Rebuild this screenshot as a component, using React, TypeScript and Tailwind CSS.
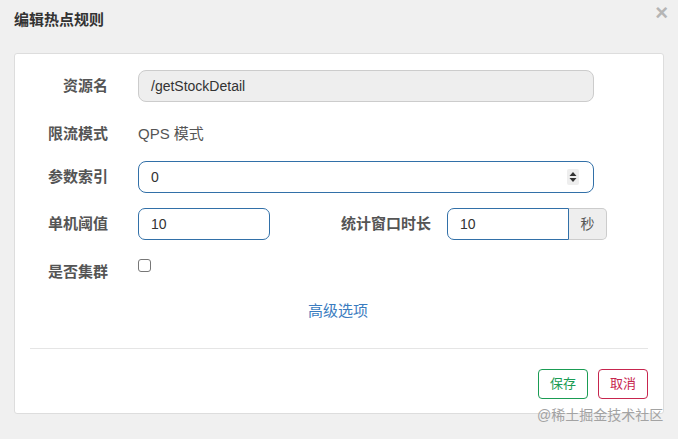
import React from 'react'

const font = { fontFamily: '"Liberation Sans", "Noto Sans CJK SC", sans-serif' }

function Label({ children }: { children: React.ReactNode }) {
  return <div className="w-[93px] shrink-0 text-right text-[15px] font-bold text-[#555]">{children}</div>
}

function Spinner() {
  return (
    <svg width="12" height="16" viewBox="0 0 12 16" className="shrink-0">
      <rect x="0" y="0" width="12" height="16" rx="2" fill="#eeeeee" />
      <path d="M6 3 L9.5 7 L2.5 7 Z" fill="#333" />
      <path d="M6 13 L9.5 9 L2.5 9 Z" fill="#333" />
    </svg>
  )
}

export default function App() {
  return (
    <div className="relative w-[678px] h-[439px] bg-[#f0f0f0] overflow-hidden" style={font}>
      {/* header */}
      <div className="flex items-center justify-between h-[40px] pl-[14px] pr-[10px]">
        <h2 className="text-[15px] font-bold text-[#333] mt-[1px]">编辑热点规则</h2>
        <span className="text-[22px] leading-none font-bold text-[#b5b5b5] -mt-[14px]">×</span>
      </div>

      {/* panel */}
      <div className="mt-[13px] ml-[14px] w-[650px] h-[361px] bg-white border border-[#dddddd] rounded-[3px] pt-[16px]">
        {/* 资源名 */}
        <div className="flex items-center h-[32px]">
          <Label>资源名</Label>
          <div className="ml-[30px] w-[456px] h-[32px] flex items-center px-[12px] bg-[#eeeeee] border border-[#cccccc] rounded-[8px] text-[14px] text-[#333]">
            /getStockDetail
          </div>
        </div>

        {/* 限流模式 */}
        <div className="flex items-center h-[32px] mt-[16px]">
          <Label>限流模式</Label>
          <div className="ml-[30px] text-[15px] text-[#555]">QPS 模式</div>
        </div>

        {/* 参数索引 */}
        <div className="flex items-center h-[32px] mt-[11px]">
          <Label>参数索引</Label>
          <div className="ml-[30px] w-[456px] h-[32px] flex items-center justify-between pl-[12px] pr-[14px] border border-[#3270a8] rounded-[8px] text-[14px] text-[#333]">
            <span>0</span>
            <Spinner />
          </div>
        </div>

        {/* 单机阈值 / 统计窗口时长 */}
        <div className="flex items-center h-[32px] mt-[15px]">
          <Label>单机阈值</Label>
          <div className="ml-[30px] w-[132px] h-[32px] flex items-center px-[12px] border border-[#3270a8] rounded-[7px] text-[14px] text-[#333]">
            10
          </div>
          <div className="w-[161px] text-right text-[15px] font-bold text-[#555]">统计窗口时长</div>
          <div className="ml-[16px] flex h-[32px]">
            <div className="w-[122px] h-[32px] flex items-center px-[12px] border border-[#3270a8] rounded-l-[7px] text-[14px] text-[#333]">
              10
            </div>
            <div className="w-[38px] h-[32px] flex items-center justify-center bg-[#eeeeee] border border-l-0 border-[#cccccc] rounded-r-[5px] text-[14px] text-[#555]">
              秒
            </div>
          </div>
        </div>

        {/* 是否集群 */}
        <div className="flex h-[32px] mt-[16px]">
          <div className="self-center">
            <Label>是否集群</Label>
          </div>
          <div className="ml-[30px] mt-[3px] w-[13px] h-[13px] border border-[#777] rounded-[3px] bg-white" />
        </div>

        {/* 高级选项 */}
        <div className="flex justify-center mt-[12px] h-[22px] items-center">
          <span className="text-[15px] text-[#3a7cc0] ml-[-2px]">高级选项</span>
        </div>

        <div className="mx-[15px] mt-[26px] border-t border-[#e5e5e5]" />

        {/* buttons */}
        <div className="flex justify-end gap-[10px] pr-[15px] mt-[20px]">
          <button className="w-[50px] h-[30px] border border-[#1a9c54] rounded-[4px] text-[13px] text-[#1a9c54] bg-white">
            保存
          </button>
          <button className="w-[50px] h-[30px] border border-[#c7254e] rounded-[4px] text-[13px] text-[#c7254e] bg-white">
            取消
          </button>
        </div>
      </div>

      <div className="absolute left-[537px] top-[405px] text-[14px] leading-[20px] text-[#a3a3a3]">@稀土掘金技术社区</div>
    </div>
  )
}
